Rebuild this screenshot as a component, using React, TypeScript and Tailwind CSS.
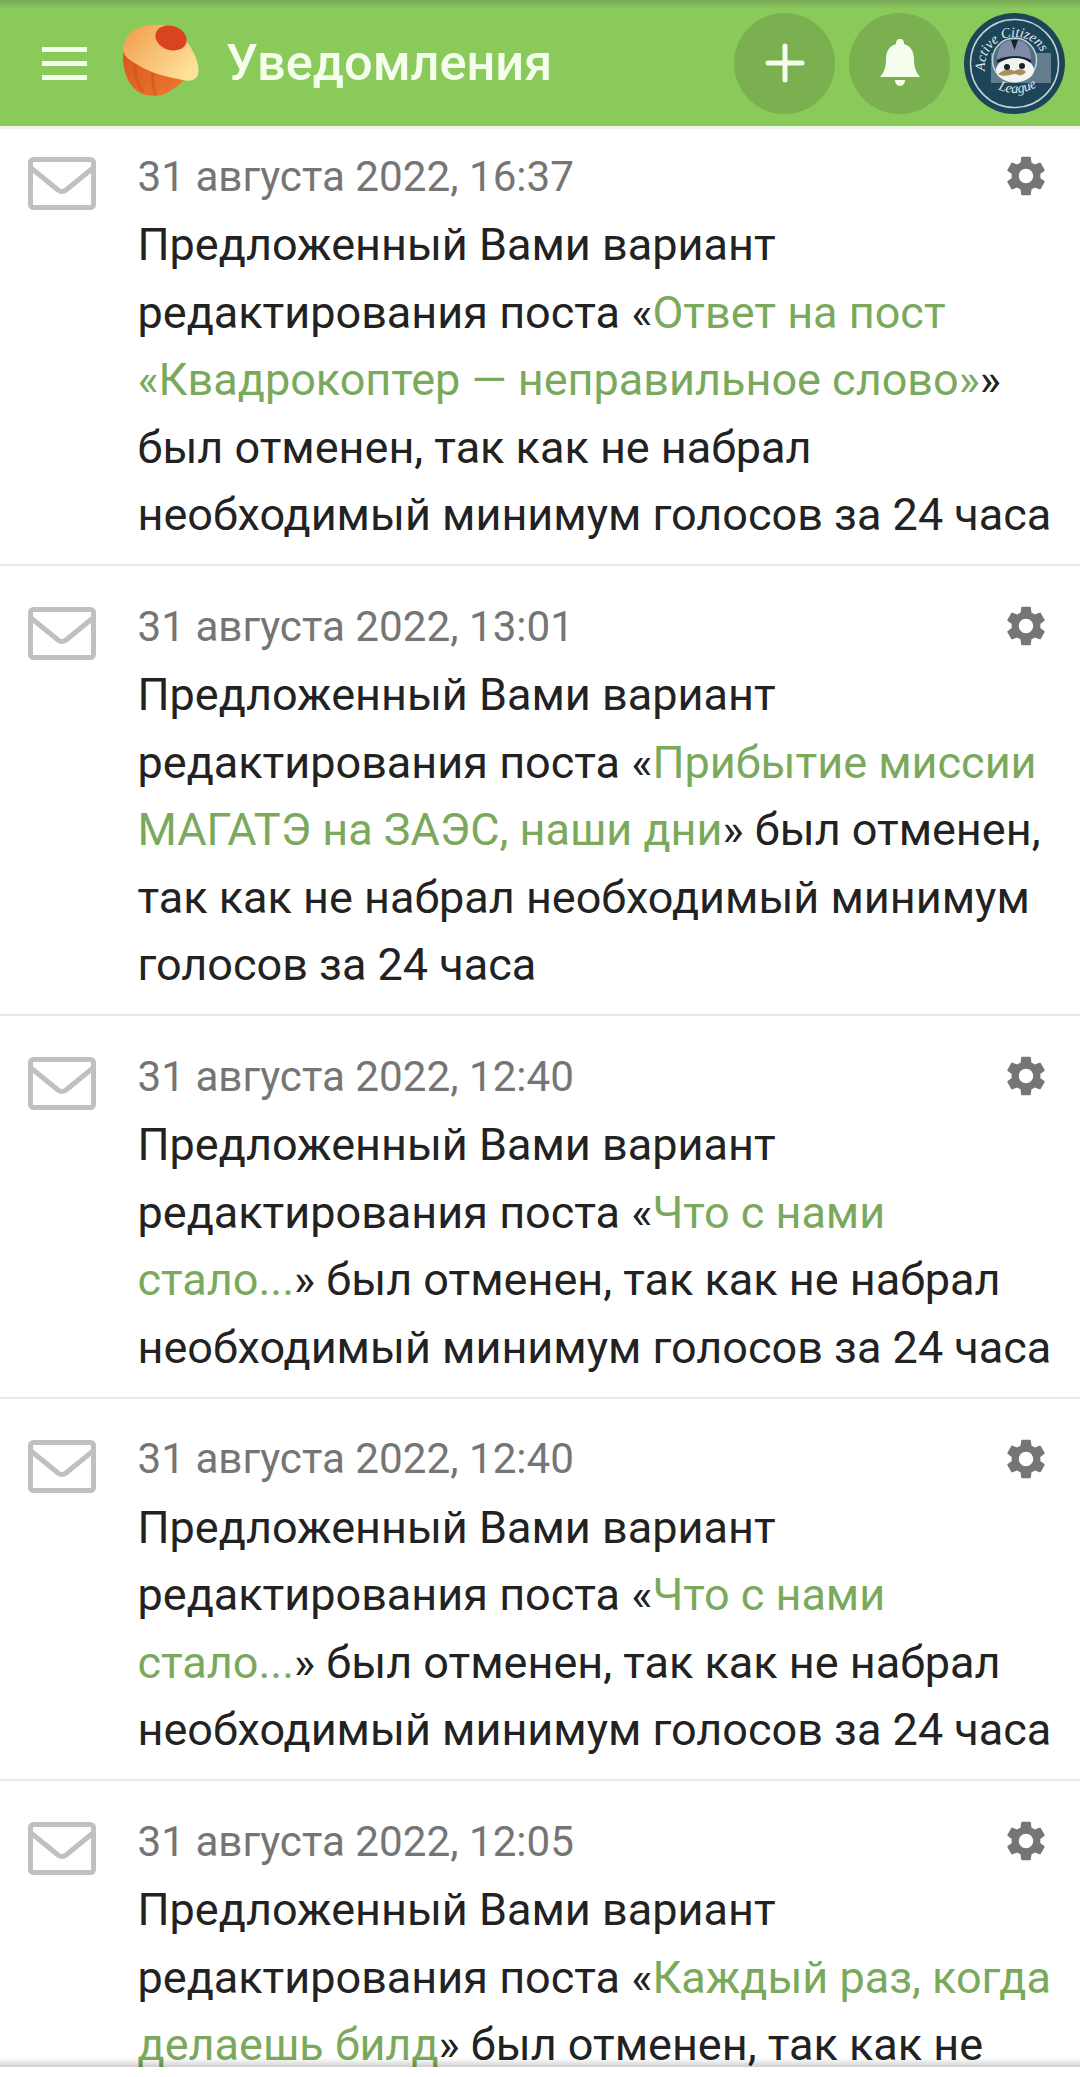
interface NotificationItem {
  date: string;
  before: string;
  link: string;
  after: string;
}

const notifications: NotificationItem[] = [
  {
    date: "31 августа 2022, 16:37",
    before: "Предложенный Вами вариант редактирования поста «",
    link: "Ответ на пост «Квадрокоптер — неправильное слово»",
    after: "» был отменен, так как не набрал необходимый минимум голосов за 24 часа",
  },
  {
    date: "31 августа 2022, 13:01",
    before: "Предложенный Вами вариант редактирования поста «",
    link: "Прибытие миссии МАГАТЭ на ЗАЭС, наши дни",
    after: "» был отменен, так как не набрал необходимый минимум голосов за 24 часа",
  },
  {
    date: "31 августа 2022, 12:40",
    before: "Предложенный Вами вариант редактирования поста «",
    link: "Что с нами стало...",
    after: "» был отменен, так как не набрал необходимый минимум голосов за 24 часа",
  },
  {
    date: "31 августа 2022, 12:40",
    before: "Предложенный Вами вариант редактирования поста «",
    link: "Что с нами стало...",
    after: "» был отменен, так как не набрал необходимый минимум голосов за 24 часа",
  },
  {
    date: "31 августа 2022, 12:05",
    before: "Предложенный Вами вариант редактирования поста «",
    link: "Каждый раз, когда делаешь билд",
    after: "» был отменен, так как не набрал необходимый минимум голосов за 24 часа",
  },
];

function Logo() {
  return (
    <svg viewBox="0 0 78 74" className="w-[78px] h-[74px] shrink-0">
      <defs>
        <linearGradient id="cap" x1="0" y1="0" x2="1" y2="0.7">
          <stop offset="0" stopColor="#f29a48" />
          <stop offset="1" stopColor="#fde29a" />
        </linearGradient>
        <linearGradient id="base" x1="0" y1="0" x2="1" y2="1">
          <stop offset="0" stopColor="#d9541e" />
          <stop offset="1" stopColor="#ee7a30" />
        </linearGradient>
      </defs>
      <path d="M0 26 C-1 40 2 58 14 67 C24 74 40 73 47 67 C53 63 58 60 61 56 Z" fill="url(#base)" />
      <path d="M12 40 C11 50 14 60 20 68 M30 48 C29 56 30 64 33 71" stroke="#c9481a" strokeWidth="3" fill="none" opacity="0.4" />
      <path d="M0 26 C1 12 12 1 30 1 C45 0 52 4 60 13 C68 22 76 36 75.5 47 C75 56 68 58 60 56 C44 53 27 49 15 41 C7 36 0 32 0 26 Z" fill="url(#cap)" />
      <ellipse cx="48" cy="14" rx="16" ry="12" transform="rotate(18 48 14)" fill="#d9431f" />
    </svg>
  );
}

function Avatar() {
  return (
    <svg viewBox="0 0 101 101" className="w-[101px] h-[101px] shrink-0">
      <defs>
        <path id="arcTop" d="M21 58 A30 30 0 0 1 81 50" />
        <path id="arcBottom" d="M32 75 Q52 86 74 73" />
      </defs>
      <circle cx="50.5" cy="50.5" r="50.5" fill="#1c4558" />
      <circle cx="50.5" cy="50.5" r="44" fill="none" stroke="#c3d2d8" strokeWidth="1.5" />
      <rect x="27" y="40" width="60" height="30" fill="#627d8c" />
      <circle cx="50.5" cy="47" r="22" fill="#50707f" stroke="#c3d2d8" strokeWidth="1.5" />
      <path d="M33 47 C33 33 40 27 50 27 C61 27 67 33 67 47 C58 42 43 42 33 47 Z" fill="#7f8aa8" />
      <path d="M33 47 C43 42 58 42 67 47 L67 50 C58 45 43 45 33 50 Z" fill="#14222c" />
      <path d="M47 27 L54 27 L50.5 37 Z" fill="#14222c" />
      <ellipse cx="51" cy="57" rx="19" ry="12" fill="#f3f4ef" />
      <path d="M34 61 C41 55 47 56 50.5 58 C54 56 59 55 62 59 C57 65 54 61 50.5 61 C47 61 41 65 34 61 Z" fill="#a88f5c" />
      <circle cx="43" cy="54" r="3" fill="#14222c" />
      <circle cx="58" cy="53" r="3" fill="#14222c" />
      <text fontSize="14" fill="#e6ecee" fontFamily="'Liberation Serif', serif" fontStyle="italic">
        <textPath href="#arcTop">Active Citizens</textPath>
      </text>
      <text fontSize="14" fill="#e6ecee" fontFamily="'Liberation Serif', serif" fontStyle="italic">
        <textPath href="#arcBottom" startOffset="2">League</textPath>
      </text>
    </svg>
  );
}

function Envelope() {
  return (
    <svg viewBox="0 0 68 53" className="w-[68px] h-[53px] shrink-0" fill="none" stroke="#c0c0c0" strokeWidth="5">
      <rect x="2.5" y="2.5" width="63" height="48" rx="3" />
      <path d="M3 11 L30 33 Q34 36 38 33 L65 11" strokeLinejoin="round" />
    </svg>
  );
}

function Gear() {
  return (
    <svg viewBox="0 0 24 24" className="w-[48px] h-[48px] mr-[10px] shrink-0" fill="#757575">
      <path d="M19.14 12.94c.04-.3.06-.61.06-.94 0-.32-.02-.64-.07-.94l2.03-1.58a.49.49 0 0 0 .12-.61l-1.92-3.32a.488.488 0 0 0-.59-.22l-2.39.96c-.5-.38-1.03-.7-1.62-.94l-.36-2.54a.484.484 0 0 0-.48-.41h-3.84c-.24 0-.43.17-.47.41l-.36 2.54c-.59.24-1.13.57-1.62.94l-2.39-.96c-.22-.08-.47 0-.59.22L2.74 8.87c-.12.21-.08.47.12.61l2.03 1.58c-.05.3-.09.63-.09.94s.02.64.07.94l-2.03 1.58a.49.49 0 0 0-.12.61l1.92 3.32c.12.22.37.29.59.22l2.39-.96c.5.38 1.03.7 1.62.94l.36 2.54c.05.24.24.41.48.41h3.84c.24 0 .44-.17.47-.41l.36-2.54c.59-.24 1.13-.56 1.62-.94l2.39.96c.22.08.47 0 .59-.22l1.92-3.32c.12-.22.07-.47-.12-.61l-2.01-1.58zM12 15.6c-1.98 0-3.6-1.62-3.6-3.6s1.62-3.6 3.6-3.6 3.6 1.62 3.6 3.6-1.62 3.6-3.6 3.6z" />
    </svg>
  );
}

function NotificationRow({ item }: { item: NotificationItem }) {
  return (
    <div className="flex border-b-2 border-[#e8e8e8] pl-[28px] pr-[20px] pt-[27.5px] pb-[15.5px] first:pt-[14.5px]">
      <div className="w-[109.5px] shrink-0 pt-[13.5px]">
        <Envelope />
      </div>
      <div className="min-w-0 flex-1">
        <div className="flex h-[67.5px] items-center justify-between pb-[2px]">
          <span className="text-[42.2px] text-[#757575]">{item.date}</span>
          <Gear />
        </div>
        <p className="text-[45px] text-[#222222]">
          {item.before}
          <a className="text-[#7aa95c]">{item.link}</a>
          {item.after}
        </p>
      </div>
    </div>
  );
}

export default function App() {
  return (
    <div className="relative flex flex-col h-[2077px] w-[1080px] overflow-hidden bg-white font-['Roboto',sans-serif] leading-[67.5px]">
      <header className="relative z-10 shrink-0 flex items-center h-[129px] border-b-[3px] border-[#eef3e6] bg-[#8aca5b] pl-[42px] pr-[15px]">
        <div className="absolute inset-x-0 top-0 h-[9px] bg-gradient-to-b from-[#76a755] to-[#8aca5b]" />
        <div className="relative flex w-full items-center">
          <div className="flex flex-col gap-[9px] w-[45px] shrink-0">
            <span className="h-[5px] bg-[#f5fdec]" />
            <span className="h-[5px] bg-[#f5fdec]" />
            <span className="h-[5px] bg-[#f5fdec]" />
          </div>
          <div className="ml-[36px] mb-[4px]">
            <Logo />
          </div>
          <h1 className="ml-[25px] flex-1 text-[50.5px] font-medium leading-none text-[#f5fdec]">Уведомления</h1>
          <div className="flex items-center gap-[14px]">
            <button className="flex w-[101px] h-[101px] items-center justify-center rounded-full bg-[#7ab04f]">
              <svg viewBox="0 0 40 40" className="w-[40px] h-[40px]" fill="none" stroke="#f5fdec" strokeWidth="5" strokeLinecap="round">
                <path d="M20 3 V37 M3 20 H37" />
              </svg>
            </button>
            <button className="flex w-[101px] h-[101px] items-center justify-center rounded-full bg-[#7ab04f]">
              <svg viewBox="0 0 40 48" className="w-[40px] h-[48px]" fill="#f5fdec">
                <path d="M20 0 C23 0 24 2 24 5 C31 7 34 13 34 20 C34 29 36 33 40 38 H0 C4 33 6 29 6 20 C6 13 9 7 16 5 C16 2 17 0 20 0 Z" />
                <path d="M15 41 H25 C25 44 23 47 20 47 C17 47 15 44 15 41 Z" />
              </svg>
            </button>
            <Avatar />
          </div>
        </div>
      </header>
      <main className="flex-1 min-h-0 overflow-hidden">
        {notifications.map((item, i) => (
          <NotificationRow key={i} item={item} />
        ))}
      </main>
      <div className="relative z-10 shrink-0 h-[10px] bg-white">
        <div className="absolute inset-x-0 bottom-full h-[9px] bg-gradient-to-b from-transparent to-[#00000030]" />
      </div>
    </div>
  );
}
